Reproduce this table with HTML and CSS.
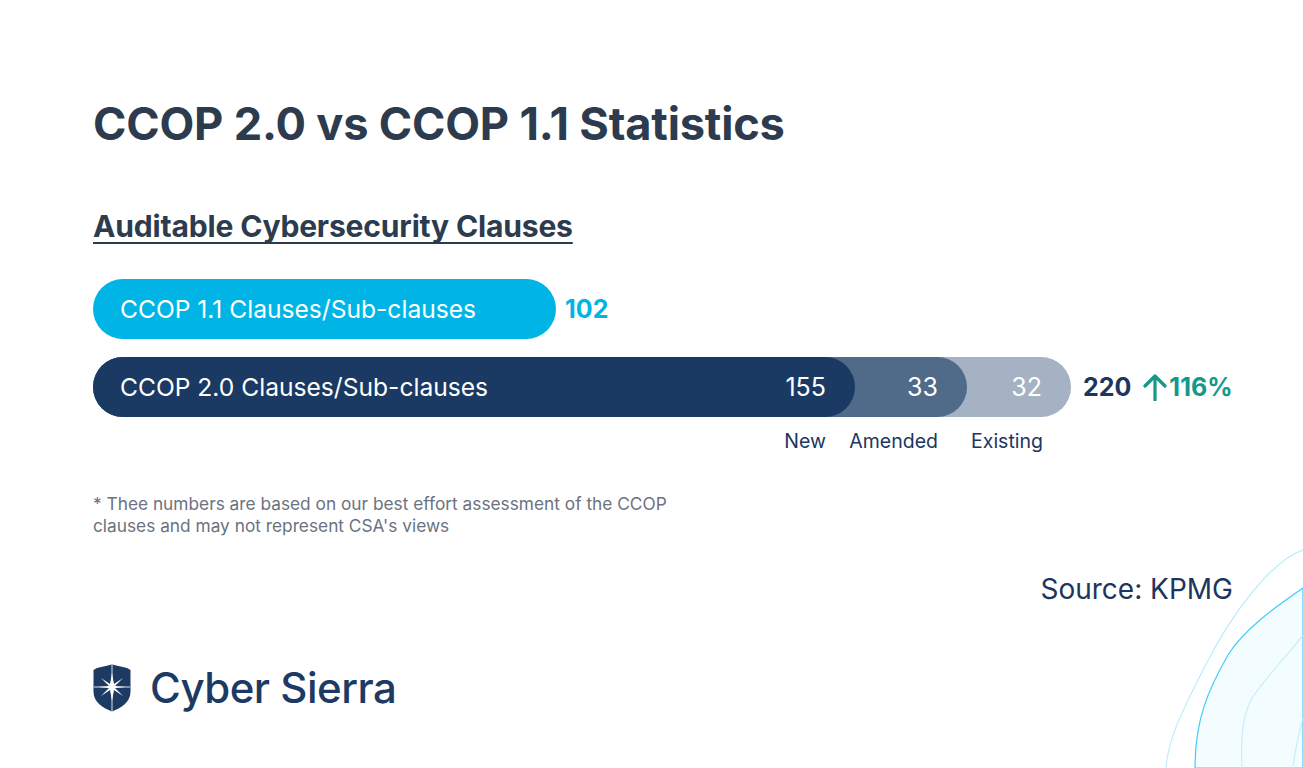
FILE: index.html
```html
<!DOCTYPE html>
<html lang="en">
<head>
<meta charset="utf-8">
<title>CCOP 2.0 vs CCOP 1.1 Statistics</title>
<link rel="stylesheet" href="styles.css">
</head>
<body>
<div class="page">
  <svg class="decor" viewBox="0 0 140 220" width="140" height="220">
    <path d="M140 2 C 110 12, 70 62, 40 122 C 20 162, 5 190, 3 220" fill="none" stroke="#bdeefc" stroke-width="1.2"/>
    <path d="M140 40 C 115 57, 80 82, 65 107 C 45 142, 32 172, 32 220 L140 220 Z" fill="#f3fcff" stroke="#3fcdf4" stroke-width="1.2"/>
    <path d="M140 87 C 125 107, 100 132, 88 152 C 78 172, 78 195, 79 220" fill="none" stroke="#c4effb" stroke-width="1.2"/>
    <path d="M140 170 C 136 185, 132 200, 130 220" fill="none" stroke="#c4effb" stroke-width="1.2"/>
  </svg>

  <h1 class="title">CCOP 2.0 vs CCOP 1.1 Statistics</h1>
  <h2 class="subtitle">Auditable Cybersecurity Clauses</h2>

  <div class="chart">
    <div class="row">
      <div class="bar bar-old"><span class="bar-label">CCOP 1.1 Clauses/Sub-clauses</span></div>
      <span class="total total-old">102</span>
    </div>
    <div class="row">
      <div class="bar seg-existing">
        <div class="seg-amended">
          <div class="seg-new">
            <span class="bar-label">CCOP 2.0 Clauses/Sub-clauses</span>
            <span class="seg-num">155</span>
          </div>
          <span class="seg-num">33</span>
        </div>
        <span class="seg-num">32</span>
      </div>
      <span class="total total-new">220</span>
      <span class="growth">
        <svg class="arrow" viewBox="0 0 24 28" width="24" height="28"><path d="M12 27 V3 M2 13 L12 3 L22 13" fill="none" stroke="#12998a" stroke-width="3.2" stroke-linecap="round" stroke-linejoin="round"/></svg>116%
      </span>
    </div>
    <div class="legend">
      <span>New</span>
      <span>Amended</span>
      <span>Existing</span>
    </div>
  </div>

  <p class="note">* Thee numbers are based on our best effort assessment of the CCOP<br>clauses and may not represent CSA's views</p>

  <div class="source-row"><span class="source">Source: KPMG</span></div>

  <div class="logo">
    <svg class="shield" viewBox="0 0 38 48" width="38" height="48">
      <path d="M4 4 L19 0.5 L34 4 L37.5 6 V28 C37.5 38 28 44 19 47.5 C10 44 0.5 38 0.5 28 V6 Z" fill="#1c3a64"/>
      <path d="M19 1 V47 M1 23 H37" stroke="#ffffff" stroke-width="1" opacity="0.85"/>
      <path d="M19 9 L21 20 L30 14 L22 22 L33 23 L22 24 L30 32 L21 26 L19 37 L17 26 L8 32 L16 24 L5 23 L16 22 L8 14 L17 20 Z" fill="#ffffff"/>
    </svg>
    <span class="logo-text">Cyber Sierra</span>
  </div>
</div>
</body>
</html>
```

FILE: styles.css
```css
* { box-sizing: border-box; }

html, body {
  margin: 0;
  padding: 0;
  background: #ffffff;
}

body {
  font-family: Inter, "Noto Sans", "Liberation Sans", sans-serif;
  color: #1c3660;
}

.page {
  position: relative;
  width: 1303px;
  height: 768px;
  overflow: hidden;
  padding: 96px 0 0 93px;
  display: flex;
  flex-direction: column;
}

.decor {
  position: absolute;
  right: 0;
  bottom: 0;
}

.title {
  margin: 0;
  font-size: 45.2px;
  line-height: 55px;
  font-weight: 700;
  color: #2d3b4f;
  letter-spacing: -0.2px;
}

.subtitle {
  margin: 56px 0 0;
  font-size: 30.1px;
  line-height: 38px;
  font-weight: 700;
  color: #2d3b4f;
  letter-spacing: -0.2px;
  align-self: flex-start;
  text-decoration: underline;
  text-decoration-thickness: 2px;
  text-underline-offset: 5px;
  text-decoration-skip-ink: none;
}

.chart {
  margin-top: 34px;
  display: flex;
  flex-direction: column;
  gap: 18px;
}

.row {
  display: flex;
  align-items: center;
}

.bar {
  height: 60px;
  border-radius: 30px;
  display: flex;
  align-items: center;
  color: #ffffff;
  font-size: 24.6px;
}

.bar-label {
  padding-left: 27px;
  white-space: nowrap;
}

.bar-old {
  width: 463px;
  background: #00b5e6;
}

.total {
  font-size: 25px;
  font-weight: 700;
  margin-left: 9px;
}

.total-old { color: #00b5e6; }
.total-new { color: #1c3660; margin-left: 12px; }

.seg-existing {
  width: 978px;
  background: #a4b2c3;
}

.seg-amended,
.seg-new {
  height: 60px;
  border-radius: 30px;
  display: flex;
  align-items: center;
}

.seg-amended {
  width: 874px;
  background: #506a89;
}

.seg-new {
  width: 762px;
  background: #1b3a63;
}

.seg-num {
  margin-left: auto;
  padding-right: 29px;
  font-size: 25px;
}

.growth {
  display: flex;
  align-items: center;
  margin-left: 12px;
  color: #12998a;
  font-size: 25px;
  font-weight: 700;
  gap: 2px;
}

.legend {
  width: 950px;
  margin-top: -6px;
  display: grid;
  grid-template-columns: 733px 112px 105px;
  font-size: 19.5px;
  line-height: 24px;
  color: #1c3660;
}

.legend span {
  text-align: right;
  white-space: nowrap;
}

.note {
  margin: 40px 0 0;
  font-size: 17.3px;
  line-height: 22px;
  color: #6b7280;
}

.source-row {
  margin-top: 35px;
  width: 1140px;
  display: flex;
  justify-content: flex-end;
}

.source {
  font-size: 28px;
  line-height: 34px;
  color: #1c3660;
}

.logo {
  margin-top: 56px;
  display: flex;
  align-items: center;
  gap: 19px;
}

.logo-text {
  font-size: 42px;
  font-weight: 500;
  color: #1c3a64;
  letter-spacing: -0.5px;
}
```
